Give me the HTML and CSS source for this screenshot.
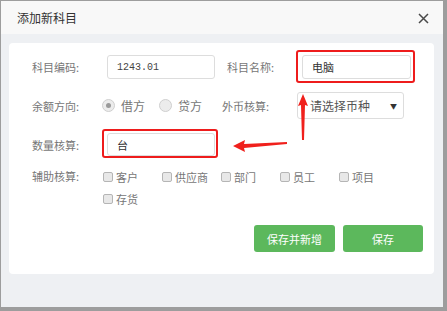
FILE: index.html
```html
<!DOCTYPE html>
<html lang="zh">
<head>
    <meta charset="UTF-8">
    <meta name="viewport" content="width=device-width, initial-scale=1.0">
    <title>添加新科目</title>
    <link rel="stylesheet" href="styles.css">
</head>
<body>

<div class="dialog">
    <div class="dialog-header">
        <span class="dialog-title">添加新科目</span>
        <span class="close">
            <svg width="11" height="11" viewBox="0 0 11 11"><path d="M1 1L10 10M10 1L1 10" stroke="#4a4a4a" stroke-width="1.5" fill="none"/></svg>
        </span>
    </div>
    <div class="dialog-body">
        <div class="card">
            <div class="row row-1">
                <label class="label">科目编码:</label>
                <div class="field field-a">
                    <input class="input code" type="text" value="1243.01">
                </div>
                <label class="label label-b">科目名称:</label>
                <div class="field">
                    <span class="mark mark-name">
                        <input class="input name" type="text" value="电脑">
                    </span>
                </div>
            </div>

            <div class="row row-2">
                <label class="label">余额方向:</label>
                <div class="field radios">
                    <span class="radio checked"></span><span class="radio-text">借方</span>
                    <span class="radio"></span><span class="radio-text">贷方</span>
                </div>
                <label class="label label-c">外币核算:</label>
                <div class="select">
                    <span>请选择币种</span>
                    <span class="caret">▼</span>
                </div>
            </div>

            <div class="row row-3">
                <label class="label">数量核算:</label>
                <div class="field">
                    <span class="mark mark-unit">
                        <input class="input unit" type="text" value="台">
                    </span>
                </div>
            </div>

            <div class="row row-4">
                <label class="label">辅助核算:</label>
                <div class="checks">
                    <span class="check"><i class="box"></i>客户</span>
                    <span class="check"><i class="box"></i>供应商</span>
                    <span class="check"><i class="box"></i>部门</span>
                    <span class="check"><i class="box"></i>员工</span>
                    <span class="check"><i class="box"></i>项目</span>
                    <span class="check"><i class="box"></i>存货</span>
                </div>
            </div>

            <div class="actions">
                <button class="btn btn-wide">保存并新增</button>
                <button class="btn">保存</button>
            </div>

            <!-- annotation arrows -->
            <svg class="arrows" width="425" height="231" viewBox="0 0 425 231">
                <polygon fill="#f0201c" points="294,51 299,63 296,62 295,97 293,97 292,62 289,63"/>
                <polygon fill="#f0201c" points="224,103 236,97 235,101 278,99 278,101 235,105 236,109"/>
            </svg>
        </div>
    </div>
</div>

</body>
</html>
```

FILE: styles.css
```css
body {
    margin: 0;
    padding: 0;
    background-color: #9d9d9d;
    font-family: "Noto Sans CJK SC", "Liberation Sans", sans-serif;
    height: 311px;
    overflow: hidden;
}

.dialog {
    margin: 1px 0 0 1px;
    width: 442px;
    height: 306px;
    background-color: #eef0f3;
}

.dialog-header {
    height: 33px;
    background-color: #f8f8f8;
    display: flex;
    align-items: center;
    justify-content: space-between;
    padding: 0 14px 0 16px;
}

.dialog-title {
    font-size: 12px;
    color: #333;
}

.close {
    display: flex;
    margin-top: 2px;
}

.dialog-body {
    padding: 9px 9px 0 8px;
}

.card {
    position: relative;
    height: 231px;
    box-sizing: border-box;
    background-color: #fff;
    border-radius: 4px;
    padding: 12px 11px 0 23px;
    font-size: 11px;
    color: #777;
}

.row {
    display: flex;
    align-items: center;
}

.row-2 {
    margin-top: 13px;
    height: 27px;
}

.row-3 {
    margin-top: 14px;
}

.row-4 {
    margin-top: 10px;
    align-items: flex-start;
}

.label {
    width: 70px;
    flex: none;
    line-height: 20px;
}

.label-b {
    margin-left: 12px;
}

.label-c {
    width: 75px;
}

.field-a {
    width: 113px;
}

.input {
    display: block;
    margin-left: 5px;
    box-sizing: border-box;
    height: 24px;
    border: 1px solid #ddd;
    border-radius: 3px;
    padding: 0 9px;
    font-family: "Noto Sans CJK SC", sans-serif;
    font-size: 11px;
    color: #333;
    outline: none;
}

.code {
    width: 108px;
    font-family: "Liberation Mono", monospace;
    font-size: 10px;
    color: #444;
}

.name {
    width: 109px;
}

.unit {
    width: 108px;
    height: 23px;
}

.mark {
    position: relative;
    display: block;
}

.mark::after {
    content: "";
    position: absolute;
    border: 2px solid #ee1c1c;
    border-radius: 3px;
}

.mark-name::after {
    top: -5px;
    right: -4px;
    bottom: -4px;
    left: -1px;
}

.mark-unit::after {
    top: -4px;
    right: -3px;
    bottom: -2px;
    left: 0;
}

.radios {
    width: 120px;
    display: flex;
    align-items: center;
}

.radio {
    width: 13px;
    height: 13px;
    box-sizing: border-box;
    border: 1px solid #cfcfcf;
    border-radius: 50%;
    background-color: #ececec;
    position: relative;
}

.radio.checked::after {
    content: "";
    position: absolute;
    top: 3px;
    left: 3px;
    width: 5px;
    height: 5px;
    border-radius: 50%;
    background-color: #9a9a9a;
}

.radio-text {
    margin: 0 14px 0 6px;
    font-size: 12px;
}

.select {
    width: 107px;
    height: 27px;
    box-sizing: border-box;
    border: 1px solid #ddd;
    border-radius: 3px;
    display: flex;
    align-items: center;
    justify-content: space-between;
    padding: 0 6px 0 12px;
    font-size: 12px;
    color: #555;
}

.caret {
    font-size: 7px;
    color: #333;
}

.checks {
    width: 300px;
    display: flex;
    flex-wrap: wrap;
}

.check {
    width: 59px;
    line-height: 22px;
    display: flex;
    align-items: center;
    font-size: 11px;
}

.box {
    width: 10px;
    height: 10px;
    box-sizing: border-box;
    border: 1px solid #b5b5b5;
    border-radius: 2px;
    background-color: #e8e8e8;
    margin: 0 3px 0 1px;
}

.actions {
    margin-top: 15px;
    display: flex;
    justify-content: flex-end;
    gap: 8px;
}

.btn {
    width: 80px;
    height: 27px;
    border: none;
    border-radius: 3px;
    background-color: #5cb85c;
    color: #fff;
    font-family: "Noto Sans CJK SC", sans-serif;
    font-size: 11px;
    padding: 0;
}

.btn-wide {
    width: 81px;
}

.arrows {
    position: absolute;
    top: 0;
    left: 0;
    pointer-events: none;
}
```
